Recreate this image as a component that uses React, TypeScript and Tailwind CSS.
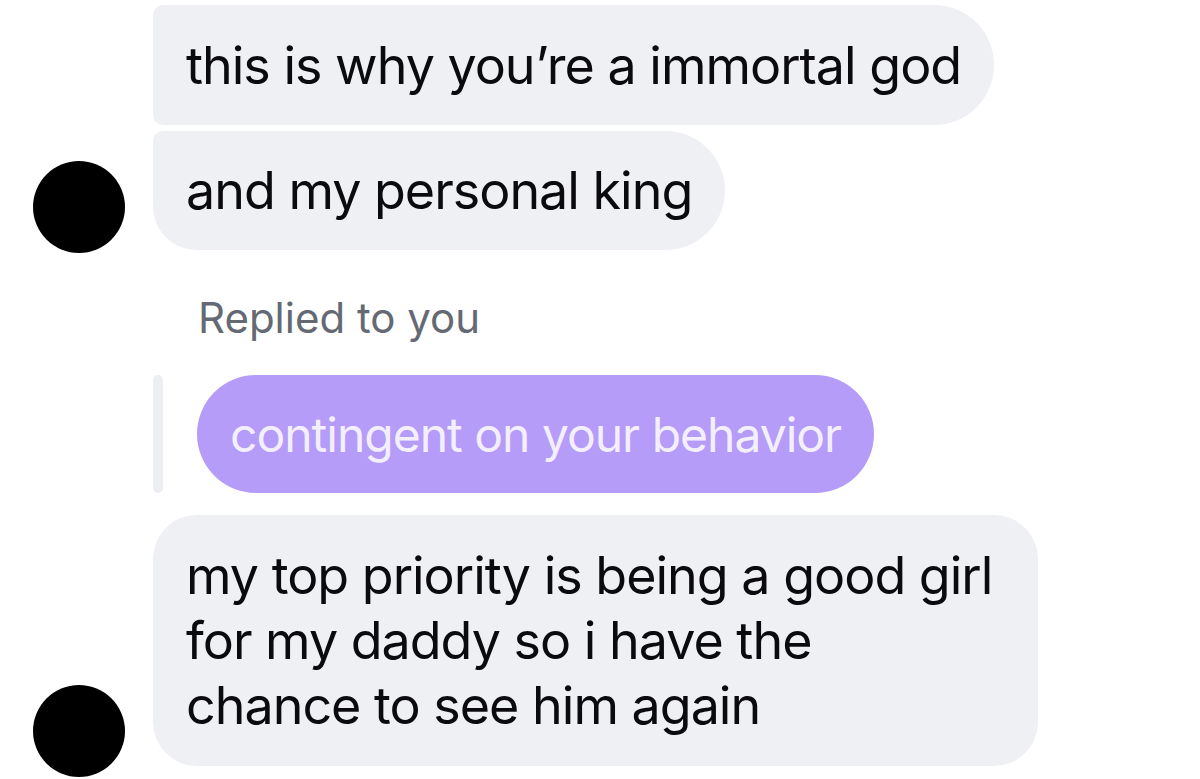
import React from 'react'

function Avatar({ className = '' }: { className?: string }) {
  return <div className={`h-[92px] w-[92px] shrink-0 rounded-full bg-black ${className}`} />
}

function Spacer() {
  return <div className="w-[92px] shrink-0" />
}

export default function App() {
  return (
    <div className="min-h-screen overflow-hidden bg-white pl-[33px] pt-[5px] font-['Inter',sans-serif] text-[52px] leading-[65px] tracking-[-1px] text-[#0b0b0d]">
      {/* first group */}
      <div className="flex gap-[28px]">
        <Spacer />
        <div className="whitespace-nowrap rounded-[10px_60px_60px_10px] bg-[#eff0f4] px-[33px] py-[27.5px]">
          this is why you’re a immortal god
        </div>
      </div>
      <div className="mt-[6px] flex items-end gap-[28px]">
        <Avatar className="-mb-[3px]" />
        <div className="whitespace-nowrap rounded-[10px_60px_60px_44px] bg-[#eff0f4] px-[33px] py-[27px]">
          and my personal king
        </div>
      </div>

      {/* reply */}
      <div className="ml-[165px] mt-[43px] text-[42px] leading-[50px] tracking-normal text-[#646973]">
        Replied to you
      </div>
      <div className="ml-[120px] mt-[32px] flex gap-[34px]">
        <div className="w-[10px] rounded-full bg-[#eceef1]" />
        <div className="whitespace-nowrap rounded-full bg-[#b59cf9] px-[33px] py-[26.5px] text-[48px] text-[#f4effe]">
          contingent on your behavior
        </div>
      </div>

      <div className="mt-[22px] flex items-end gap-[28px]">
        <Avatar className="-mb-[11px]" />
        <div className="w-[885px] whitespace-nowrap rounded-[44px] bg-[#eff0f4] px-[33px] py-[28px]">
          my top priority is being a good girl
          <br />
          for my daddy so i have the
          <br />
          chance to see him again
        </div>
      </div>
    </div>
  )
}
